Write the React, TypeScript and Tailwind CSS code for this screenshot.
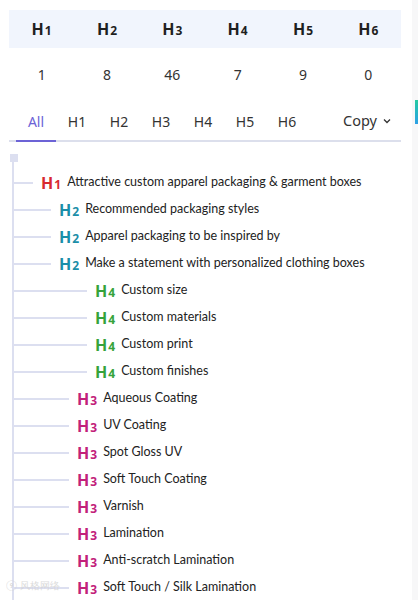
import React from "react";

const counts = [1, 8, 46, 7, 9, 0];
const tabs = ["All", "H1", "H2", "H3", "H4", "H5", "H6"];

type Item = { level: number; text: string };
const items: Item[] = [
  { level: 1, text: "Attractive custom apparel packaging & garment boxes" },
  { level: 2, text: "Recommended packaging styles" },
  { level: 2, text: "Apparel packaging to be inspired by" },
  { level: 2, text: "Make a statement with personalized clothing boxes" },
  { level: 4, text: "Custom size" },
  { level: 4, text: "Custom materials" },
  { level: 4, text: "Custom print" },
  { level: 4, text: "Custom finishes" },
  { level: 3, text: "Aqueous Coating" },
  { level: 3, text: "UV Coating" },
  { level: 3, text: "Spot Gloss UV" },
  { level: 3, text: "Soft Touch Coating" },
  { level: 3, text: "Varnish" },
  { level: 3, text: "Lamination" },
  { level: 3, text: "Anti-scratch Lamination" },
  { level: 3, text: "Soft Touch / Silk Lamination" },
];

const colors: Record<number, string> = {
  1: "text-[#d8292f]",
  2: "text-[#1b8ea8]",
  3: "text-[#c2207a]",
  4: "text-[#36a33a]",
};

const connector: Record<number, string> = {
  1: "w-[19px]",
  2: "w-[37px]",
  3: "w-[55px]",
  4: "w-[73px]",
};

function HTag({ n, className }: { n: number; className: string }) {
  return (
    <span
      className={"inline-flex items-baseline font-bold leading-none " + className}
      style={{ fontFamily: '"Noto Sans", sans-serif' }}
    >
      <span className="text-[16px]">H</span>
      <span className="text-[12px] ml-[1px]">{n}</span>
    </span>
  );
}

export default function App() {
  return (
    <div
      className="relative w-[418px] h-[600px] overflow-hidden bg-white text-[#222]"
      style={{ fontFamily: 'Lato, "Noto Sans", sans-serif' }}
    >
      <div className="absolute right-0 top-0 w-[6px] h-[600px] bg-[#f7f7f8]" />
      <div className="absolute right-0 top-[100px] w-[3px] h-[24px] bg-gradient-to-b from-[#27c9a0] to-[#2fa0e6]" />

      <div className="pl-[9px] pr-[17px] pt-[10px]">
        <div className="grid grid-cols-6 h-[38px] bg-[#f1f5fd] items-center text-center">
          {counts.map((_, i) => (
            <div key={i} className="flex justify-center">
              <HTag n={i + 1} className="text-[#1f1f1f]" />
            </div>
          ))}
        </div>
        <div
          className="grid grid-cols-6 h-[52px] items-center text-center text-[14px] text-[#333]"
          style={{ fontFamily: '"Noto Sans", sans-serif' }}
        >
          {counts.map((c, i) => (
            <div key={i}>{c}</div>
          ))}
        </div>

        <div
          className="flex items-center h-[42px] pt-[2px] border-b-2 border-[#dcdfec] text-[14px] text-[#333]"
          style={{ fontFamily: '"Noto Sans", sans-serif' }}
        >
          {tabs.map((t, i) => (
            <div
              key={t}
              className={
                i === 0
                  ? "relative w-[40px] ml-[7px] h-full flex items-center justify-center text-[#6c63d6]"
                  : "w-[42px] h-full flex items-center justify-center"
              }
            >
              {t}
              {i === 0 && (
                <div className="absolute left-0 right-0 -bottom-[2px] h-[2px] bg-[#6c63d6]" />
              )}
            </div>
          ))}
          <div className="ml-auto mr-[10px] flex items-center gap-[6px]">
            <span className="text-[14.5px]">Copy</span>
            <svg width="8" height="6" viewBox="0 0 8 6" fill="none">
              <path d="M1 1.5 L4 4.5 L7 1.5" stroke="#333" strokeWidth="1.3" />
            </svg>
          </div>
        </div>
      </div>

      <div className="pl-[10px] pt-[12px]">
        <div className="w-[8px] h-[8px] bg-[#dcdff0]" />
        <div className="ml-[2px] border-l-2 border-[#dcdff0] pt-[7px] pb-[40px]">
          {items.map((it, i) => (
            <div key={i} className="flex items-center h-[27px]">
              <div className={"h-[2px] bg-[#dcdff0] " + connector[it.level]} />
              <HTag n={it.level} className={"ml-[8px] " + colors[it.level]} />
              <span className="ml-[6px] text-[12.5px] text-[#222] whitespace-nowrap">{it.text}</span>
            </div>
          ))}
        </div>
      </div>

      <div className="absolute left-[6px] top-[580px] text-[10px] text-[#d4d4d4] opacity-80 leading-none">
        ⑨ 风格网络
      </div>
    </div>
  );
}
